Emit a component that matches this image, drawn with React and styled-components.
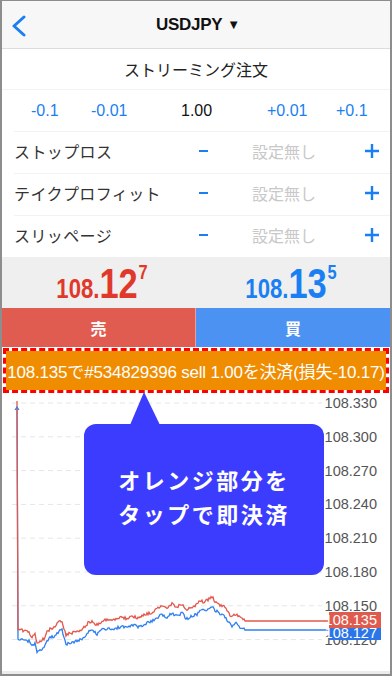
import * as React from "react";
import styled, { createGlobalStyle } from "styled-components";

const GlobalStyle = createGlobalStyle`
    html, body {
        margin: 0;
        padding: 0;
        background: #fff;
    }
    * {
        box-sizing: border-box;
    }
`;

const LATIN = `"Liberation Sans", Arial, sans-serif`;
const CJK = `"Liberation Sans", "Noto Sans CJK JP", sans-serif`;
const BLUE = "#1a7ff2";
const RED = "#e0392c";

// key points of the ask line (x, y in chart coordinates)
const ASK_KEYS = [
    [16, 236], [22, 238], [27, 239], [30, 244], [33, 241], [35, 250], [38, 248],
    [42, 246], [45, 239], [48, 236], [52, 234], [56, 230], [60, 228], [62, 236],
    [64, 242], [70, 240], [78, 238], [83, 234], [86, 230], [90, 228], [95, 232],
    [100, 228], [106, 226], [110, 228], [115, 226], [120, 224], [125, 226],
    [130, 223], [137, 225], [143, 222], [148, 220], [152, 218], [156, 215],
    [160, 213], [165, 215], [170, 211], [175, 214], [180, 211], [185, 217],
    [190, 214], [195, 212], [198, 208], [202, 209], [207, 206], [210, 204],
    [213, 208], [218, 212], [222, 213], [226, 220], [230, 224], [234, 221],
    [238, 225], [242, 226],
];

const rand = (seed) => {
    const x = Math.sin(seed * 12.9898) * 43758.5453;
    return x - Math.floor(x);
};

const buildPath = (offset, seed, startY) => {
    const pts = [];
    for (let i = 0; i < ASK_KEYS.length - 1; i++) {
        const [x1, y1] = ASK_KEYS[i];
        const [x2, y2] = ASK_KEYS[i + 1];
        for (let x = x1; x < x2; x += 1) {
            const t = (x - x1) / (x2 - x1);
            const jitter = (rand(x * 3.1 + seed) - 0.5) * 3;
            pts.push([x, y1 + (y2 - y1) * t + jitter + offset]);
        }
    }
    const last = ASK_KEYS[ASK_KEYS.length - 1];
    pts.push([last[0], last[1] + offset]);
    pts.push([243, 228 + offset]);
    pts.push([328, 228 + offset]);
    let d = `M15 ${startY} L${pts[0][0]} ${pts[0][1].toFixed(1)}`;
    pts.slice(1).forEach(([x, y]) => {
        d += ` L${x} ${y.toFixed(1)}`;
    });
    return d;
};

const AXIS = ["108.330", "108.300", "108.270", "108.240", "108.210", "108.180", "108.150", "108.120"];

const Screen = styled.div`
    width: 392px;
    height: 676px;
    border: 2px solid #8d8d8d;
    border-top-width: 1px;
    display: flex;
    flex-direction: column;
    overflow: hidden;
    position: relative;
    background: #fff;
    font-family: ${CJK};
`;

const NavBar = styled.div`
    height: 48px;
    flex: none;
    background: #f7f7f7;
    border-bottom: 1px solid #dcdcdc;
    display: flex;
    align-items: center;
    justify-content: center;
    position: relative;
`;

const BackButton = styled.svg`
    position: absolute;
    left: 9px;
    top: 14px;
`;

const NavTitle = styled.div`
    font-family: ${LATIN};
    font-weight: 700;
    font-size: 17px;
    color: #111;
    letter-spacing: -0.3px;
    display: flex;
    align-items: center;
    gap: 5px;
    padding-left: 4px;
`;

const Caret = styled.span`
    font-size: 13px;
`;

const SubTitle = styled.div`
    height: 41px;
    flex: none;
    display: flex;
    align-items: center;
    justify-content: center;
    font-size: 16px;
    color: #222;
    border-bottom: 1px solid #f2f2f2;
`;

const QtyRow = styled.div`
    height: 41px;
    flex: none;
    display: grid;
    grid-template-columns: 60px 90px 86px 69px 1fr;
    align-items: center;
    padding-left: 29px;
    font-family: ${LATIN};
    font-size: 16px;
`;

const QtyCell = styled.span`
    color: ${(p) => (p.$plain ? "#111" : BLUE)};
`;

const SettingList = styled.div`
    padding-left: 12px;
    flex: none;
`;

const SettingRow = styled.div`
    height: 42px;
    display: flex;
    align-items: center;
    border-top: 1px solid #f2f2f2;
    padding-right: 10px;
    padding-bottom: 3px;
`;

const SettingLabel = styled.span`
    width: 185px;
    font-size: 16px;
    color: #333;
    letter-spacing: 0.4px;
`;

const Minus = styled.span`
    width: 9px;
    height: 2.5px;
    background: ${BLUE};
    margin-right: 44px;
`;

const Empty = styled.span`
    flex: 1;
    font-size: 16px;
    color: #c8c8c8;
`;

const Plus = styled.svg`
    display: block;
`;

const PriceBand = styled.div`
    height: 51px;
    flex: none;
    background: #efefef;
    display: grid;
    grid-template-columns: 1fr 1fr;
    align-items: center;
`;

const Price = styled.div`
    display: flex;
    justify-content: center;
    align-items: baseline;
    font-family: ${LATIN};
    font-weight: 700;
    color: ${(p) => p.$color};
    padding-top: 2px;
    transform: translateX(${(p) => p.$shift || 0}px) scaleX(0.82);
`;

const PriceSmall = styled.span`
    font-size: 27px;
`;

const PriceBig = styled.span`
    font-size: 42px;
    line-height: 1;
`;

const PriceSup = styled.span`
    font-size: 20px;
    align-self: flex-start;
    margin-top: -2px;
    margin-left: 1px;
`;

const ActionRow = styled.div`
    height: 39px;
    flex: none;
    display: grid;
    grid-template-columns: 194px 1fr;
`;

const ActionButton = styled.div`
    background: ${(p) => p.$color};
    color: #fff;
    font-size: 16px;
    font-weight: 700;
    display: flex;
    align-items: center;
    justify-content: center;
    border-right: ${(p) => (p.$divider ? "1px solid #e8a09a" : "none")};
`;

const CloseBanner = styled.div`
    margin: 1px 1px 0;
    height: 45px;
    flex: none;
    border: 3px dashed #ff0000;
    background: #f08c00;
    background-clip: padding-box;
    display: flex;
    align-items: center;
    justify-content: center;
    color: #fff;
    font-family: ${CJK};
    font-size: 17px;
    letter-spacing: -0.2px;
    white-space: nowrap;
`;

const ChartArea = styled.div`
    flex: 1;
    position: relative;
`;

const ChartSvg = styled.svg`
    display: block;
`;

const Callout = styled.div`
    position: absolute;
    left: 82px;
    top: 31px;
    width: 240px;
    height: 151px;
    background: #3c3cff;
    border-radius: 12px;
    display: flex;
    flex-direction: column;
    align-items: center;
    justify-content: center;
    padding-bottom: 2px;
    color: #fff;
    font-size: 22px;
    font-weight: 700;
    letter-spacing: 2.5px;
    line-height: 34px;

    &::before {
        content: "";
        position: absolute;
        left: 46px;
        top: -32px;
        width: 0;
        height: 0;
        border-left: 14px solid transparent;
        border-right: 16px solid transparent;
        border-bottom: 33px solid #3c3cff;
    }
`;

const BottomStrip = styled.div`
    height: 4px;
    flex: none;
    background: #ececec;
`;

const settings = ["ストップロス", "テイクプロフィット", "スリッページ"];

const yFor = (i) => 10 + i * 33.8;

export default function App() {
    const askPath = React.useMemo(() => buildPath(0, 1, 8), []);
    const bidPath = React.useMemo(() => buildPath(9, 7, 15), []);

    return (
        <React.Fragment>
            <GlobalStyle />
            <Screen>
                <NavBar>
                    <BackButton width="16" height="22" viewBox="0 0 16 22">
                        <path d="M13 2 L3 11 L13 20" fill="none" stroke={BLUE} strokeWidth="3" strokeLinecap="round" strokeLinejoin="round" />
                    </BackButton>
                    <NavTitle>
                        USDJPY <Caret>▼</Caret>
                    </NavTitle>
                </NavBar>

                <SubTitle>ストリーミング注文</SubTitle>

                <QtyRow>
                    <QtyCell>-0.1</QtyCell>
                    <QtyCell>-0.01</QtyCell>
                    <QtyCell $plain>1.00</QtyCell>
                    <QtyCell>+0.01</QtyCell>
                    <QtyCell>+0.1</QtyCell>
                </QtyRow>

                <SettingList>
                    {settings.map((label) => (
                        <SettingRow key={label}>
                            <SettingLabel>{label}</SettingLabel>
                            <Minus />
                            <Empty>設定無し</Empty>
                            <Plus width="16" height="16" viewBox="0 0 16 16">
                                <path d="M8 1 V15 M1 8 H15" stroke={BLUE} strokeWidth="2.4" />
                            </Plus>
                        </SettingRow>
                    ))}
                </SettingList>

                <PriceBand>
                    <Price $color={RED} $shift={3}>
                        <PriceSmall>108.</PriceSmall>
                        <PriceBig>12</PriceBig>
                        <PriceSup>7</PriceSup>
                    </Price>
                    <Price $color={BLUE} $shift={-2}>
                        <PriceSmall>108.</PriceSmall>
                        <PriceBig>13</PriceBig>
                        <PriceSup>5</PriceSup>
                    </Price>
                </PriceBand>

                <ActionRow>
                    <ActionButton $color="#e05c50" $divider>売</ActionButton>
                    <ActionButton $color="#4b92f2">買</ActionButton>
                </ActionRow>

                <CloseBanner>108.135で#534829396 sell 1.00を決済(損失-10.17)</CloseBanner>

                <ChartArea>
                    <ChartSvg width="388" height="278" viewBox="0 0 388 278">
                        {AXIS.map((label, i) => (
                            <line key={label} x1="10" x2="320" y1={yFor(i)} y2={yFor(i)} stroke="#e6e6e6" strokeDasharray="5 4" />
                        ))}
                        <path d={bidPath} fill="none" stroke="#2f7ff0" strokeWidth="1.3" />
                        <path d={askPath} fill="none" stroke="#e2584c" strokeWidth="1.3" />
                        <path d="M13 17 L15 14 L17 17" fill="none" stroke="#2f7ff0" strokeWidth="1.2" />
                        {AXIS.map((label, i) => (
                            <text key={label} x="375" y={yFor(i) + 5} textAnchor="end" fontFamily="Liberation Sans, Arial, sans-serif" fontSize="14.5" fill="#555">
                                {label}
                            </text>
                        ))}
                        <rect x="327" y="234" width="52" height="13" fill="#2a75e8" />
                        <text x="375" y="245" textAnchor="end" fontFamily="Liberation Sans, Arial, sans-serif" fontSize="14.5" fill="#fff">108.127</text>
                        <rect x="327" y="219" width="52" height="16" fill="#df5b4e" />
                        <text x="375" y="232" textAnchor="end" fontFamily="Liberation Sans, Arial, sans-serif" fontSize="14.5" fill="#fff">108.135</text>
                    </ChartSvg>
                    <Callout>
                        <span>オレンジ部分を</span>
                        <span>タップで即決済</span>
                    </Callout>
                </ChartArea>
                <BottomStrip />
            </Screen>
        </React.Fragment>
    );
}
